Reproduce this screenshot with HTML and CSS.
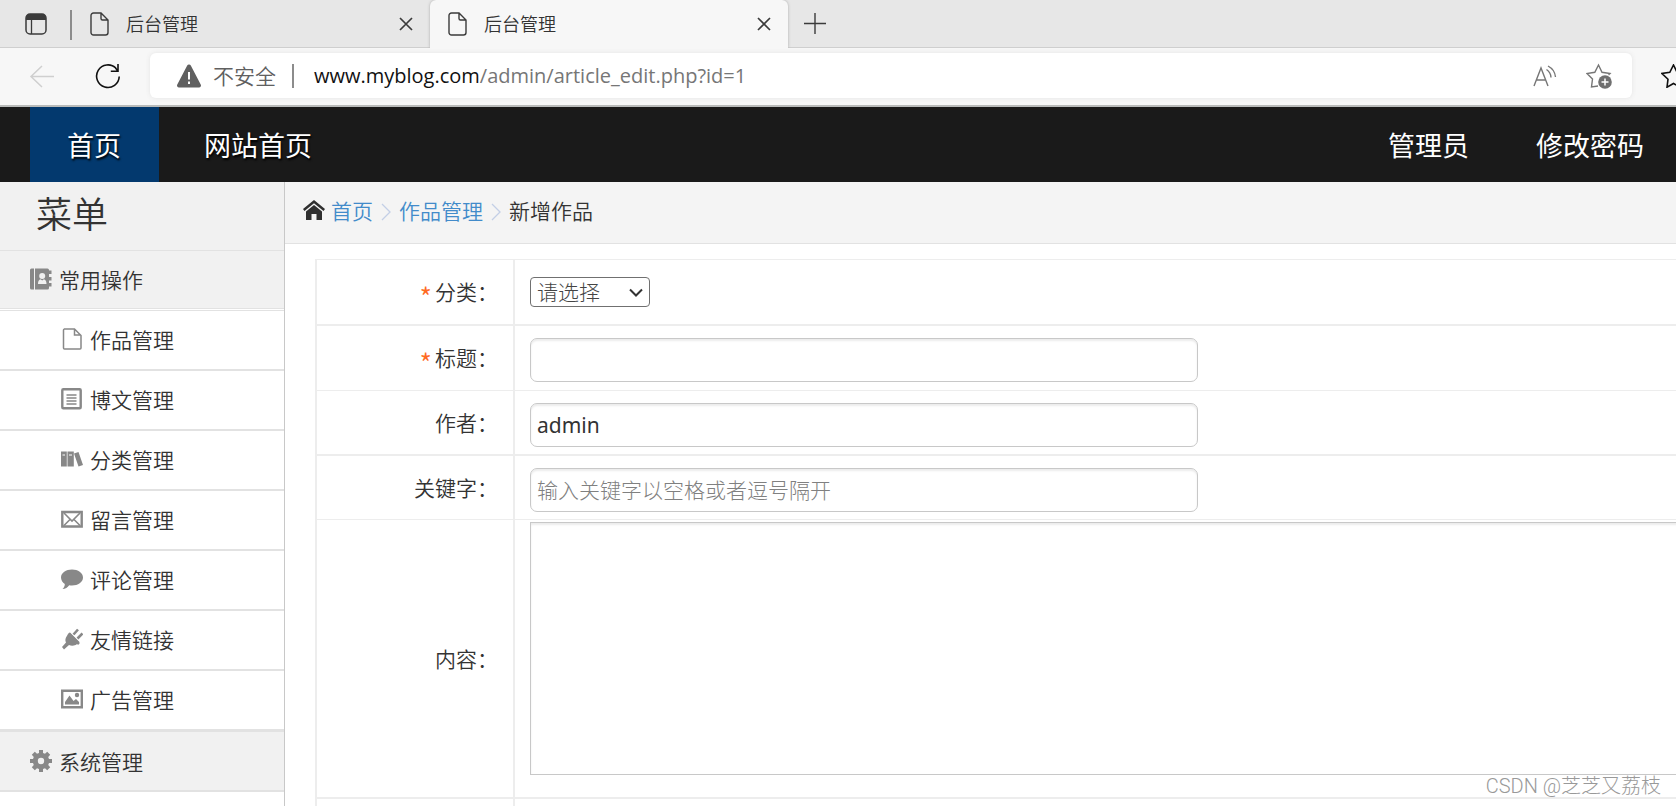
FILE: index.html
```html
<!DOCTYPE html>
<html lang="zh-CN">
<head>
<meta charset="utf-8">
<title>后台管理</title>
<link rel="stylesheet" href="styles.css">
</head>
<body>
<header class="tabbar">
  <button class="tab-menu" aria-label="标签页操作菜单"><svg width="22" height="22" viewBox="0 0 22 22"><rect x="1" y="1" width="20" height="20" rx="4" fill="none" stroke="#3b3b3b" stroke-width="1.5"/><path d="M1 7V5a4 4 0 0 1 4-4h12a4 4 0 0 1 4 4v2z" fill="#3b3b3b"/><path d="M6.500 7v14" stroke="#3b3b3b" stroke-width="1.3"/></svg></button>
  <div class="tab">
    <svg class="doc" width="20" height="24" viewBox="0 0 20 24"><path d="M3.500 1H11l7 7v12.500a2.500 2.500 0 0 1-2.500 2.500h-12A2.500 2.500 0 0 1 1 20.500V3.500A2.500 2.500 0 0 1 3.500 1M11 1v5.500A1.500 1.500 0 0 0 12.500 8H18" fill="none" stroke="#3b3b3b" stroke-width="1.4"/></svg>
    <span class="tab-title">后台管理</span>
    <button class="tab-close" aria-label="关闭标签页"><svg width="14" height="14" viewBox="0 0 14 14"><path d="M1 1l12 12M13 1L1 13" stroke="#3b3b3b" stroke-width="1.7"/></svg></button>
  </div>
  <div class="tab tab-active">
    <svg class="doc" width="20" height="24" viewBox="0 0 20 24"><path d="M3.500 1H11l7 7v12.500a2.500 2.500 0 0 1-2.500 2.500h-12A2.500 2.500 0 0 1 1 20.500V3.500A2.500 2.500 0 0 1 3.500 1M11 1v5.500A1.500 1.500 0 0 0 12.500 8H18" fill="none" stroke="#3b3b3b" stroke-width="1.4"/></svg>
    <span class="tab-title">后台管理</span>
    <button class="tab-close" aria-label="关闭标签页"><svg width="14" height="14" viewBox="0 0 14 14"><path d="M1 1l12 12M13 1L1 13" stroke="#3b3b3b" stroke-width="1.7"/></svg></button>
  </div>
  <button class="tab-new" aria-label="新建标签页"><svg width="22" height="22" viewBox="0 0 22 22"><path d="M11 0v21M0 10.500h22" stroke="#3b3b3b" stroke-width="1.4"/></svg></button>
</header>

<div class="toolbar">
  <button class="tool" aria-label="后退"><svg width="26" height="24" viewBox="0 0 26 24"><path d="M13 2L2 12.500 13 23M2 12.500h23" fill="none" stroke="#cfcfcf" stroke-width="1.500"/></svg></button>
  <button class="tool" aria-label="刷新"><svg width="26" height="26" viewBox="0 0 26 26"><path d="M24.200 13.500a11.300 11.300 0 1 1-3.200-8.200M23 1v7.200h-7.200M23 8.200L20.500 5" fill="none" stroke="#111" stroke-width="1.600"/></svg></button>
  <div class="address">
    <svg width="26" height="24" viewBox="0 0 26 24"><path d="M13 .5a2 2 0 0 1 1.800 1L24.700 20.500a2 2 0 0 1-1.700 3H3a2 2 0 0 1-1.700-3L11.200 1.500A2 2 0 0 1 13 .5z" fill="#606060"/><path d="M13 8v7.500M13 17.500v2.500" stroke="#fff" stroke-width="2"/></svg>
    <span class="unsafe">不安全</span>
    <span class="divider"></span>
    <span class="url">www.myblog.com<span class="path">/admin/article_edit.php?id=1</span></span>
    <button class="tool" aria-label="大声朗读"><svg width="24" height="22" viewBox="0 0 24 22"><path d="M1 21L8 3l7 18M3.500 15h9" fill="none" stroke="#767676" stroke-width="1.400"/><path d="M13.500 4.500a10 10 0 0 1 4.500 8M15 1a14 14 0 0 1 7.500 11" fill="none" stroke="#767676" stroke-width="1.400"/></svg></button>
    <button class="tool" aria-label="收藏"><svg width="26" height="26" viewBox="0 0 26 26"><path d="M12 23l-6.500 1 1-8-5.500-5.500 7.800-1.200L12.500 2l3.500 7.300 8 1.200-1.500 1.500" fill="none" stroke="#767676" stroke-width="1.400"/><circle cx="19" cy="19" r="6.800" fill="#707070"/><path d="M19 15.500v7M15.500 19h7" stroke="#fff" stroke-width="1.500"/></svg></button>
  </div>
  <button class="tool favs" aria-label="收藏夹"><svg width="26" height="24" viewBox="0 0 26 24"><path d="M12.500 1l3.500 7.300 8 1.200-5.800 5.600 1.300 8L12.500 19.500 6 23.200l1-8-6-5.700 7.800-1.200z" fill="none" stroke="#111" stroke-width="1.600"/></svg></button>
</div>

<nav class="topnav">
  <a class="nav-link nav-active" href="#">首页</a>
  <a class="nav-link" href="#">网站首页</a>
  <span class="spacer"></span>
  <a class="nav-link nav-right" href="#">管理员</a>
  <a class="nav-link nav-right" href="#">修改密码</a>
</nav>

<div class="app">
  <aside class="sidebar">
    <h1 class="menu-title">菜单</h1>
    <a class="group" href="#"><svg width="22" height="22" viewBox="0 0 22 22" fill="#888"><path d="M0 2a1.500 1.500 0 0 1 1.500-1.500H4v21H1.500A1.500 1.500 0 0 1 0 20zM5 .5h12.500A1.500 1.500 0 0 1 19 2v18a1.500 1.500 0 0 1-1.500 1.500H5zM19 2.500h2.500v3.500H19zM19 9h2.500v3.500H19zM19 15h2.500v3.500H19z"/><circle cx="12.200" cy="8" r="3" fill="#f1f1f1"/><path d="M8 16c0-3 1-4.500 2.500-4.800l1.700 1.300 1.700-1.300C15.500 11.500 16.500 13 16.500 16z" fill="#f1f1f1"/></svg>常用操作</a>
    <ul class="items">
      <li><a href="#"><svg width="22" height="22" viewBox="0 0 22 22"><path d="M3 1h10.500L20 7.500V20a1 1 0 0 1-1 1H3.500a1 1 0 0 1-1-1V2a1 1 0 0 1 1-1M13.500 1v6H20" fill="none" stroke="#888" stroke-width="1.500"/></svg>作品管理</a></li>
      <li><a href="#"><svg width="22" height="22" viewBox="0 0 22 22"><rect x="1.300" y="1.300" width="18.400" height="19" rx="1" fill="none" stroke="#888" stroke-width="2.400"/><path d="M5.500 7h10M5.500 10h10M5.500 13h10M5.500 16h10" stroke="#888" stroke-width="1.300"/></svg>博文管理</a></li>
      <li><a href="#"><svg width="22" height="22" viewBox="0 0 22 22"><path d="M0 3.500h5.800v15H0zM6.500 3.500h6.300v15H6.500zM13 5.500l4.500-1.500L22 17 17.500 18.500z" fill="#888"/><path d="M1.500 7h2.500M8 7h3" stroke="#fff"/></svg>分类管理</a></li>
      <li><a href="#"><svg width="22" height="22" viewBox="0 0 22 22"><path d="M1.300 4h19.400v14.500H1.300z" fill="none" stroke="#888" stroke-width="2.400"/><path d="M3 5l8 8 8-8M3 17.500l6-6M19 17.500l-6-6" fill="none" stroke="#888" stroke-width="1.600"/></svg>留言管理</a></li>
      <li><a href="#"><svg width="22" height="22" viewBox="0 0 22 22"><path d="M11 1.500c6 0 11 3.500 11 8s-5 8-11 8c-1 0-2 0-2.800-.3C6.500 19.500 4.500 21 1.500 21c1.500-1.300 2.300-2.800 2.300-5C1.500 14.500 0 12 0 9.500c0-4.500 5-8 11-8z" fill="#888"/></svg>评论管理</a></li>
      <li><a href="#"><svg width="22" height="22" viewBox="0 0 22 22"><path d="M9 4.500L18.500 14c-4 4-7.500 4.500-10.500 3l-5 4.500-2-2.500 4-4.500C3.500 11.500 5 8 9 4.500z" fill="#888"/><path d="M7.500 5.500L18 16M12.500 6.500L17 1.500M16.500 10.500L21.500 5.500" stroke="#888" stroke-width="2.600"/></svg>友情链接</a></li>
      <li><a href="#"><svg width="22" height="22" viewBox="0 0 22 22"><path d="M1.200 2.700h19.600v16.500H1.200z" fill="none" stroke="#888" stroke-width="2.400"/><path d="M4 16.500v-2.500l4.500-6.500 4 5.500 2.500-2 3 3v2.500z" fill="#888"/><circle cx="16" cy="7" r="2.200" fill="#888"/></svg>广告管理</a></li>
    </ul>
    <a class="group group-last" href="#"><svg width="22" height="22" viewBox="0 0 22 22"><path d="M9 0h4v3l2 .8L17.200 1.800 20.200 4.800 18.200 7 19 9h3v4h-3l-.8 2 2 2.200-3 3-2.200-2-2 .8v3H9v-3l-2-.8-2.200 2-3-3 2-2.200L3 13H0V9h3l.8-2-2-2.200 3-3L7 3.800 9 3zM11 7.800a3.200 3.200 0 1 0 0 6.400 3.200 3.200 0 0 0 0-6.400z" fill="#888" fill-rule="evenodd"/></svg>系统管理</a>
  </aside>

  <main class="main">
    <div class="crumbs">
      <svg width="22" height="20" viewBox="0 0 22 20"><path d="M11 0L22 9l-1.500 2L11 3.200 1.500 11 0 9z" fill="#2f2f2f"/><path d="M11 5l8 6.500V20h-5.500v-6h-5v6H3v-8.500z" fill="#2f2f2f"/></svg>
      <a href="#">首页</a>
      <svg class="chev" width="10" height="18" viewBox="0 0 10 18"><path d="M1 1l8 8-8 8" fill="none" stroke="#c3cfe6" stroke-width="1.300"/></svg>
      <a href="#">作品管理</a>
      <svg class="chev" width="10" height="18" viewBox="0 0 10 18"><path d="M1 1l8 8-8 8" fill="none" stroke="#c3cfe6" stroke-width="1.300"/></svg>
      <span>新增作品</span>
    </div>
    <form class="form">
      <table class="grid">
        <tr class="first"><th><span class="req">*</span><label for="cat">分类：</label></th><td class="pick"><div class="select-box"><select id="cat"><option>请选择</option></select><svg class="arrow" width="14" height="10" viewBox="0 0 14 10"><path d="M1 1.500l6 6 6-6" fill="none" stroke="#333" stroke-width="2"/></svg></div></td></tr>
        <tr><th><span class="req">*</span><label for="title">标题：</label></th><td><input id="title" type="text"></td></tr>
        <tr><th><label for="author">作者：</label></th><td><input id="author" type="text" value="admin"></td></tr>
        <tr class="short"><th><label for="keys">关键字：</label></th><td><input id="keys" type="text" placeholder="输入关键字以空格或者逗号隔开"></td></tr>
        <tr><th><label for="content">内容：</label></th><td class="body-cell"><textarea id="content"></textarea></td></tr>
        <tr><th></th><td></td></tr>
      </table>
    </form>
  </main>
</div>
<div class="watermark">CSDN @芝芝又荔枝</div>
</body>
</html>
```
FILE: styles.css
```css
* { box-sizing: border-box; }
body {
  margin: 0;
  height: 100vh;
  overflow: hidden;
  display: flex;
  flex-direction: column;
  background: #fff;
  color: #333;
  font-family: "Noto Sans CJK SC", sans-serif;
  font-size: 21px;
  font-weight: 350;
}
button { border: 0; padding: 0; background: none; display: flex; }
a { color: inherit; text-decoration: none; }
svg { display: block; flex: none; }

.tabbar {
  flex: none;
  display: flex;
  align-items: stretch;
  height: 48px;
  padding-left: 25px;
  background: #e7e7e7;
  box-shadow: inset 0 -1px #cfcfcf;
}
.tab-menu { align-items: center; width: 47px; position: relative; }
.tab-menu::after {
  content: "";
  position: absolute;
  right: 0;
  top: 10px;
  width: 2px;
  height: 30px;
  background: #8c8c8c;
}
.tab {
  display: flex;
  align-items: center;
  width: 358px;
  padding: 0 17px 0 18px;
  font-size: 18px;
}
.tab .doc { margin-right: 16px; }
.tab-title { flex: 1; padding-bottom: 2px; }
.tab-active {
  background: #f7f7f7;
  border-radius: 6px 6px 0 0;
  box-shadow: 0 0 3px #aaa;
  clip-path: inset(0 -3px 0 -3px);
}
.tab-new { align-items: center; padding-left: 16px; }

.toolbar {
  flex: none;
  display: flex;
  align-items: center;
  gap: 40px;
  height: 59px;
  padding-left: 29px;
  padding-bottom: 2px;
  background: #f7f7f7;
  border-bottom: 2px solid #b9bbba;
  overflow: hidden;
}
.tool { flex: none; }
.address {
  flex: 1;
  display: flex;
  align-items: center;
  height: 45px;
  margin-left: -11px;
  padding: 0 20px 0 26px;
  border-radius: 6px;
  background: #fff;
  box-shadow: 0 0 5px #e4e4e4;
}
.unsafe { margin-left: 11px; padding-bottom: 2px; color: #606060; }
.divider { width: 2px; height: 24px; margin: 0 20px 0 16px; background: #8c8c8c; }
.url { flex: 1; color: #111; font-family: "Open Sans", sans-serif; font-size: 20px; font-weight: 400; }
.path { color: #767676; }
.address .tool + .tool { margin-left: 29px; }
.favs { margin-left: -11px; width: 15px; overflow: hidden; }

.topnav {
  flex: none;
  display: flex;
  height: 75px;
  padding: 0 32px 0 30px;
  background: #1a1a1a;
  color: #fff;
  font-size: 27px;
  font-weight: 400;
}
.nav-link {
  display: flex;
  align-items: center;
  padding: 0 38px 0 37px;
  text-shadow: 1px 2px 2px #000;
  white-space: nowrap;
}
.nav-active { background: #03396e; margin-right: 8px; }
.spacer { flex: 1; }
.nav-right { padding-left: 0; padding-right: 0; text-shadow: none; margin-left: 67px; }

.app { flex: 1; min-height: 0; display: flex; overflow: hidden; }
.sidebar { flex: none; width: 285px; border-right: 1px solid #c8c8c8; overflow: hidden; }
.menu-title {
  margin: 0;
  height: 69px;
  padding-left: 36px;
  border-bottom: 1px solid #e2e2e2;
  background: #f1f1f1;
  font-size: 36px;
  font-weight: 350;
  line-height: 60px;
}
.group {
  display: flex;
  align-items: center;
  gap: 7px;
  height: 58px;
  padding-left: 30px;
  padding-bottom: 2px;
  border-bottom: 1px solid #e2e2e2;
  background: #f1f1f1;
}
.items { list-style: none; margin: 0; padding: 0; margin-top: 1px; border-top: 1px solid #e2e2e2; }
.items a {
  display: flex;
  align-items: center;
  gap: 7px;
  height: 60px;
  padding-left: 61px;
  padding-bottom: 2px;
  border-bottom: 2px solid #e2e2e2;
}
.group-last { height: 61px; padding-bottom: 0; border-top: 1px solid #e2e2e2; border-bottom-width: 2px; }

.main { flex: 1; min-width: 0; overflow: hidden; }
.crumbs {
  display: flex;
  align-items: center;
  height: 62px;
  padding: 0 0 5px 18px;
  border-bottom: 1px solid #e2e2e2;
  background: #f4f4f4;
}
.crumbs a { color: #428bca; }
.crumbs svg { margin-right: 6px; }
.crumbs .chev { margin: 4px 8px 0; }
.form { margin: 15px 0 0 30px; }
.grid {
  width: calc(100% + 40px);
  table-layout: fixed;
  border-spacing: 0;
  border-top: 1px solid #ededed;
  border-left: 2px solid #ededed;
}
.grid th, .grid td { height: 65px; border-bottom: 1px solid #ededed; }
.grid .first th, .grid .first td { height: 66px; }
.grid .short th, .grid .short td { height: 64px; }
.grid tr:nth-child(odd) th, .grid tr:nth-child(odd) td { border-bottom-width: 2px; }
.grid th {
  width: 198px;
  padding: 0 15px 2px 0;
  border-right: 2px solid #ededed;
  font-weight: 350;
  text-align: right;
}
.grid td { padding: 12px 15px 7px; vertical-align: top; }
.grid .pick { padding-top: 17px; }
.grid .body-cell { padding: 2px 15px 22px; }
.req {
  margin-right: 3px;
  color: #ff6a22;
  font-size: 27px;
  line-height: 1px;
  vertical-align: -8px;
}
input, textarea {
  display: block;
  border: 1px solid #c8c8c8;
  box-shadow: inset 0 2px 2px #ececec;
  background: #fff;
  color: #333;
  font-family: "Noto Sans", "Noto Sans CJK SC", sans-serif;
  font-size: 21px;
}
input {
  width: 668px;
  max-width: 100%;
  height: 44px;
  padding: 0 6px;
  border-radius: 7px;
}
input::placeholder { color: #808080; font-weight: 300; opacity: 1; }
textarea { width: 100%; height: 253px; resize: none; }
.select-box { position: relative; width: 120px; }
.arrow { position: absolute; right: 7px; top: 11px; pointer-events: none; }
select {
  appearance: none;
  display: block;
  width: 100%;
  height: 30px;
  padding: 0 6px 3px;
  border: 1px solid #707070;
  border-radius: 4px;
  background: #fff;
  color: #444;
  font-family: "Noto Sans CJK SC", sans-serif;
  font-size: 21px;
  font-weight: 300;
  line-height: 26px;
}
.watermark {
  position: absolute;
  right: 15px;
  bottom: 5px;
  color: #999;
  font-family: Roboto, "Noto Sans CJK SC", sans-serif;
  font-size: 20px;
  font-weight: 300;
  line-height: 30px;
}
```
